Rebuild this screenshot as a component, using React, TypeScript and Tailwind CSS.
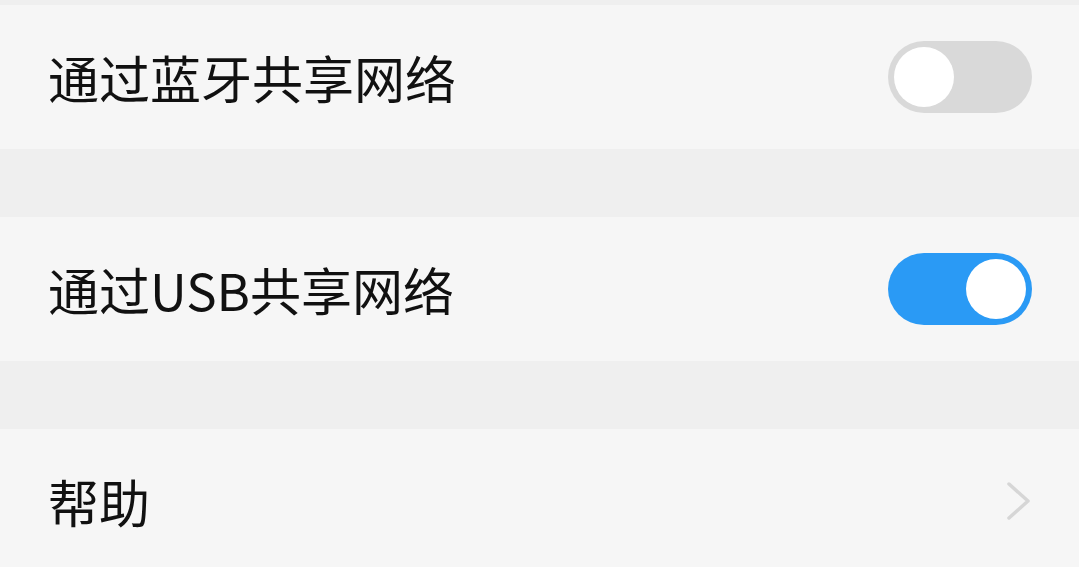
import React from 'react';

interface ToggleProps {
  on: boolean;
}

function Toggle({ on }: ToggleProps) {
  return (
    <div
      className={`flex h-[72px] w-[144px] items-center rounded-full px-[6px] ${
        on ? 'justify-end bg-[#2a9af5]' : 'justify-start bg-[#d9d9d9]'
      }`}
    >
      <div className="h-[60px] w-[60px] rounded-full bg-white" />
    </div>
  );
}

function Row({ label, children }: { label: string; children: React.ReactNode }) {
  return (
    <div className="flex h-[144px] shrink-0 items-center justify-between bg-[#f6f6f6] pl-[48px] pr-[47px]">
      <span className="text-[51px] leading-none text-[#111]">{label}</span>
      {children}
    </div>
  );
}

function Spacer() {
  return <div className="h-[68px] shrink-0 bg-[#efefef]" />;
}

export default function App() {
  return (
    <div
      className="flex h-[567px] w-full flex-col overflow-hidden bg-[#efefef]"
      style={{ fontFamily: '"Noto Sans CJK SC", "Noto Sans", sans-serif' }}
    >
      <div className="h-[5px] shrink-0 bg-[#efefef]" />
      <Row label="通过蓝牙共享网络">
        <Toggle on={false} />
      </Row>
      <Spacer />
      <Row label="通过USB共享网络">
        <Toggle on />
      </Row>
      <Spacer />
      <Row label="帮助">
        <svg width="26" height="40" viewBox="0 0 26 40">
          <path d="M3 3 L22 20 L3 37" fill="none" stroke="#d6d6d6" strokeWidth="3.5" strokeLinecap="round" strokeLinejoin="round" />
        </svg>
      </Row>
    </div>
  );
}
